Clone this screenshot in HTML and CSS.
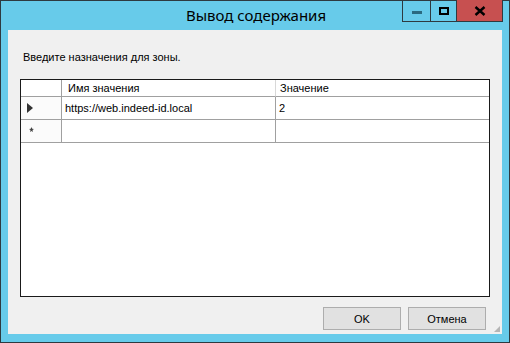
FILE: index.html
```html
<!DOCTYPE html>
<html lang="ru">
<head>
    <meta charset="UTF-8">
    <title>Вывод содержания</title>
    <link rel="stylesheet" href="styles.css">
</head>
<body>

    <!-- Dialog window -->
    <div class="window">
        <div class="titlebar">
            <div class="title">Вывод содержания</div>
            <div class="controls">
                <div class="ctl ctl-min"><span class="min-bar"></span></div>
                <div class="ctl ctl-max"><span class="max-box"></span></div>
                <div class="ctl ctl-close">
                    <svg width="12" height="10" viewBox="0 0 12 10">
                        <path d="M1.5 1 L10.5 9 M10.5 1 L1.5 9" stroke="#000" stroke-width="2.4" fill="none"/>
                    </svg>
                </div>
            </div>
        </div>

        <div class="client">
            <div class="prompt">Введите назначения для зоны.</div>

            <div class="datagrid">
                <div class="row head">
                    <div class="cell rowhead"></div>
                    <div class="cell c1">Имя значения</div>
                    <div class="cell c2">Значение</div>
                </div>
                <div class="row">
                    <div class="cell rowhead"><span class="arrow"></span></div>
                    <div class="cell c1">https://web.indeed-id.local</div>
                    <div class="cell c2">2</div>
                </div>
                <div class="row">
                    <div class="cell rowhead"><span class="star"></span></div>
                    <div class="cell c1"></div>
                    <div class="cell c2"></div>
                </div>
            </div>

            <div class="buttons">
                <button class="btn">OK</button>
                <button class="btn">Отмена</button>
            </div>
            <div class="grip"></div>
        </div>
    </div>

</body>
</html>
```

FILE: styles.css
```css
/* General */
html, body {
    margin: 0;
    padding: 0;
    background: #ffffff;
}

.window {
    width: 510px;
    height: 343px;
    box-sizing: border-box;
    background: #67cbea;
    border: 1px solid #2e3a40;
    display: flex;
    flex-direction: column;
}

/* Title bar */
.titlebar {
    height: 29px;
    position: relative;
    flex-shrink: 0;
}

.title {
    text-align: center;
    font-family: "Noto Sans", sans-serif;
    font-size: 15px;
    line-height: 29px;
    color: #000;
    padding-left: 2px;
}

.controls {
    position: absolute;
    top: -1px;
    right: 6px;
    display: flex;
    height: 21px;
    border: 1px solid #2e3a40;
    border-top: none;
}

.ctl {
    height: 21px;
    display: flex;
    align-items: center;
    justify-content: center;
}

.ctl-min {
    width: 27px;
    border-right: 1px solid #2e3a40;
}

.ctl-max {
    width: 25px;
    border-right: 1px solid #2e3a40;
}

.ctl-close {
    width: 45px;
    background: #c75050;
}

.min-bar {
    display: block;
    width: 10px;
    height: 3px;
    background: #2a6a80;
    margin-top: 4px;
}

.max-box {
    display: block;
    width: 6px;
    height: 4px;
    border: 2px solid #000;
}

/* Client area */
.client {
    flex: 1;
    margin: 0 7px 8px 7px;
    background: #f0f0f0;
    position: relative;
    display: flex;
    flex-direction: column;
    font-family: "Liberation Sans", Arial, sans-serif;
    font-size: 11px;
    color: #000;
}

.prompt {
    margin: 20px 0 0 15px;
    height: 15px;
    line-height: 15px;
}

/* Data grid */
.datagrid {
    margin: 14px 0 0 12px;
    width: 470px;
    height: 218px;
    box-sizing: border-box;
    border: 1px solid #1a1a1a;
    background: #ffffff;
}

.row {
    display: grid;
    grid-template-columns: 41px 214px 213px;
    height: 23px;
}

.row.head {
    height: 17px;
}

.cell {
    box-sizing: border-box;
    border-right: 1px solid #a0a0a0;
    border-bottom: 1px solid #a0a0a0;
    padding: 0 3px;
    line-height: 22px;
    white-space: nowrap;
    overflow: hidden;
}

.cell.c2 {
    border-right: none;
}

.head .cell {
    line-height: 16px;
    padding-left: 6px;
    border-right-color: #d8d8d8;
    border-bottom: 1px solid #a0a0a0;
    background: #ffffff;
}

.head .cell.c2 {
    padding-left: 4px;
}

.rowhead {
    background: #fbfbfb;
    position: relative;
}

.head .rowhead {
    border-right-color: #a0a0a0;
}

.arrow {
    position: absolute;
    left: 6px;
    top: 6px;
    width: 0;
    height: 0;
    border-top: 5px solid transparent;
    border-bottom: 5px solid transparent;
    border-left: 6px solid #333;
}

.star {
    position: absolute;
    left: 8px;
    top: 7px;
    width: 5px;
    height: 5px;
    background: #444;
    clip-path: polygon(50% 0, 65% 35%, 100% 40%, 70% 62%, 80% 100%, 50% 78%, 20% 100%, 30% 62%, 0 40%, 35% 35%);
}

/* Buttons */
.buttons {
    display: flex;
    justify-content: flex-end;
    gap: 7px;
    margin: 10px 16px 0 0;
}

.btn {
    width: 78px;
    height: 23px;
    background: #e1e1e1;
    border: 1px solid #adadad;
    font-family: "Liberation Sans", Arial, sans-serif;
    font-size: 11px;
    color: #000;
    padding: 0;
}

.grip {
    position: absolute;
    right: 2px;
    bottom: 2px;
    width: 6px;
    height: 6px;
    background-image: radial-gradient(circle, #b5b5b5 0.8px, transparent 1px);
    background-size: 2px 2px;
    clip-path: polygon(100% 0, 100% 100%, 0 100%);
}
```
